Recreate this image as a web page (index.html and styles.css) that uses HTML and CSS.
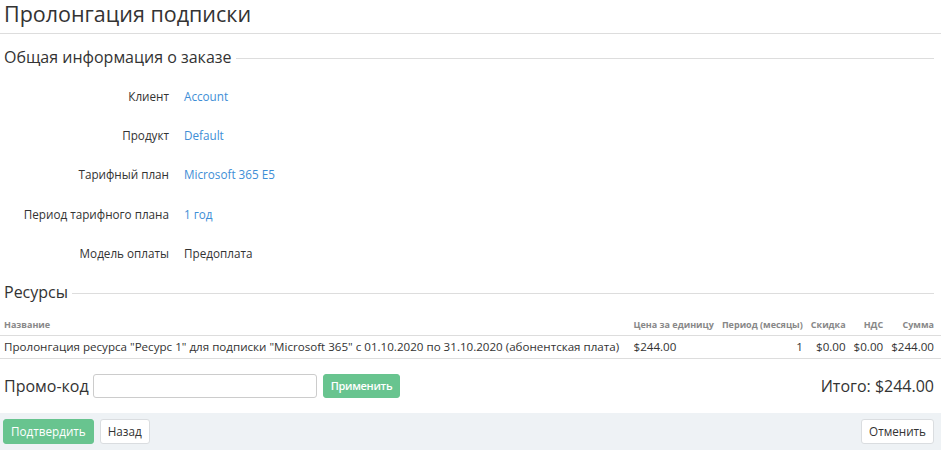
FILE: index.html
```html
<!DOCTYPE html>
<html lang="ru">
<head>
<meta charset="utf-8">
<title>Пролонгация подписки</title>
<link rel="stylesheet" href="styles.css">
</head>
<body>
<div class="page">
  <h1 class="title">Пролонгация подписки</h1>

  <section class="section">
    <div class="legend"><span>Общая информация о заказе</span></div>
    <div class="info">
      <div class="row"><div class="label">Клиент</div><div class="value"><a href="#">Account</a></div></div>
      <div class="row"><div class="label">Продукт</div><div class="value"><a href="#">Default</a></div></div>
      <div class="row"><div class="label">Тарифный план</div><div class="value"><a href="#">Microsoft 365 E5</a></div></div>
      <div class="row"><div class="label">Период тарифного плана</div><div class="value"><a href="#">1 год</a></div></div>
      <div class="row"><div class="label">Модель оплаты</div><div class="value">Предоплата</div></div>
    </div>
  </section>

  <section class="section">
    <div class="legend legend-res"><span>Ресурсы</span></div>
  </section>

  <table class="grid">
    <thead>
      <tr>
        <th class="c-name">Название</th>
        <th class="c-price">Цена за единицу</th>
        <th class="c-num">Период (месяцы)</th>
        <th class="c-num">Скидка</th>
        <th class="c-num">НДС</th>
        <th class="c-num c-sum">Сумма</th>
      </tr>
    </thead>
    <tbody>
      <tr>
        <td class="c-name">Пролонгация ресурса "Ресурс 1" для подписки "Microsoft 365" с 01.10.2020 по 31.10.2020 (абонентская плата)</td>
        <td class="c-price">$244.00</td>
        <td class="c-num">1</td>
        <td class="c-num">$0.00</td>
        <td class="c-num">$0.00</td>
        <td class="c-num c-sum">$244.00</td>
      </tr>
    </tbody>
  </table>

  <div class="promo">
    <div class="promo-left">
      <label class="promo-label" for="promo">Промо-код</label>
      <input id="promo" class="promo-input" type="text">
      <button class="btn btn-green btn-apply" type="button">Применить</button>
    </div>
    <div class="total">Итого: $244.00</div>
  </div>

  <div class="footer">
    <div class="footer-left">
      <button class="btn btn-green" type="button">Подтвердить</button>
      <button class="btn btn-white" type="button">Назад</button>
    </div>
    <button class="btn btn-white" type="button">Отменить</button>
  </div>
</div>
</body>
</html>
```

FILE: styles.css
```css
* { box-sizing: border-box; }
html, body { margin: 0; padding: 0; background: #fff; }
body {
  font-family: "Open Sans", "Liberation Sans", sans-serif;
  font-size: 11.7px;
  color: #333;
}
.page { width: 941px; }

.title {
  margin: 0;
  padding: 0 0 0 4px;
  height: 34px;
  line-height: 28px;
  font-size: 21.5px;
  font-weight: 400;
  color: #333;
  border-bottom: 1px solid #ddd;
}

.legend {
  display: flex;
  align-items: center;
  padding: 0 7px 0 4px;
  height: 22px;
  margin-top: 12px;
  font-size: 16px;
  color: #333;
}
.legend span { white-space: nowrap; padding-right: 4px; }
.legend::after {
  content: "";
  flex: 1;
  border-top: 1px solid #ddd;
  margin-top: 2px;
}
.legend-res { margin-top: 9px; }

.info { padding-top: 8px; }
.row {
  display: flex;
  align-items: center;
  height: 39.3px;
}
.label {
  width: 169px;
  text-align: right;
  color: #333;
}
.value { padding-left: 15px; }
.value a { color: #3e8ed6; text-decoration: none; }

.grid {
  width: 941px;
  table-layout: auto;
  border-collapse: collapse;
  margin-top: 10px;
}
.grid th {
  font-size: 9px;
  font-weight: 700;
  color: #888;
  padding: 4px 4px 3px;
  height: 22px;
  border-bottom: 1px solid #ddd;
  white-space: nowrap;
  vertical-align: middle;
}
.grid td {
  font-size: 11.6px;
  color: #333;
  padding: 3px 4px;
  height: 23px;
  border-bottom: 1px solid #ddd;
  white-space: nowrap;
}
.c-name { text-align: left; width: 100%; }
.c-price { text-align: left; }
.c-num { text-align: right; }
.grid .c-sum { width: 60px; padding-right: 7px; }

.promo {
  display: flex;
  align-items: center;
  justify-content: space-between;
  height: 54px;
  padding: 0 7px 0 4px;
}
.promo-left { display: flex; align-items: center; }
.promo-label { font-size: 16px; color: #333; margin-right: 4px; }
.promo-input {
  width: 224px;
  height: 24px;
  border: 1px solid #ccc;
  border-radius: 3px;
  margin: 0 6px 0 0;
  font: inherit;
}
.total { font-size: 16px; color: #333; }

.btn {
  font-family: "Open Sans", "Liberation Sans", sans-serif;
  font-size: 11.7px;
  height: 25px;
  padding: 0 7px;
  border-radius: 3px;
  cursor: pointer;
}
.btn-green {
  background: #68c48f;
  border: 1px solid #68c48f;
  color: #fff;
}
.btn-apply { height: 24px; font-weight: 600; font-size: 11px; padding: 0 7px; letter-spacing: -0.3px; }
.btn-white {
  background: #fff;
  border: 1px solid #dadde0;
  color: #333;
}

.footer {
  display: flex;
  align-items: center;
  justify-content: space-between;
  height: 37px;
  background: #eef2f5;
  padding: 0 7px 0 3px;
}
.footer-left { display: flex; gap: 6px; }
```
